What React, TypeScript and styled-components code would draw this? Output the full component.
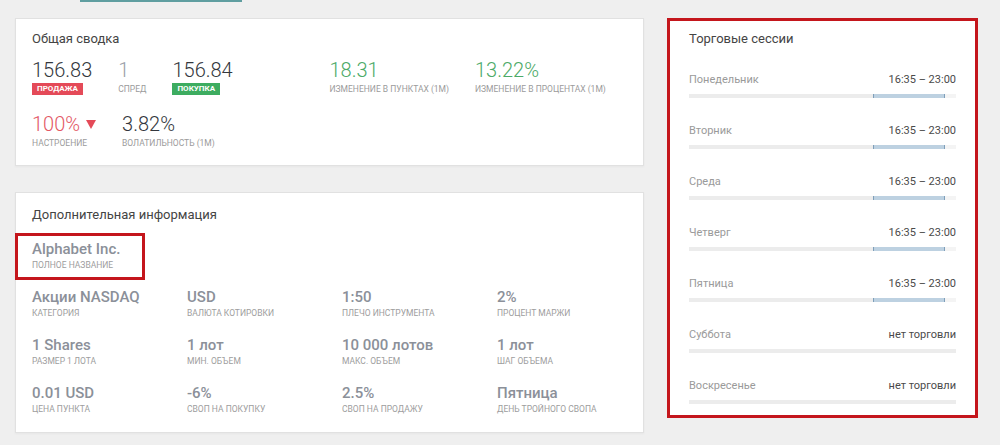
import styled, { createGlobalStyle } from "styled-components";

const GlobalStyle = createGlobalStyle`
  html, body {
    margin: 0;
    padding: 0;
    background: #efefef;
    font-family: Roboto, "Noto Sans", "Liberation Sans", sans-serif;
  }
  * {
    box-sizing: border-box;
  }
`;

const Page = styled.div`
  width: 1000px;
  height: 445px;
  overflow: hidden;
  padding: 0 22px 0 15px;
`;

const TabStrip = styled.div`
  height: 18px;
  display: flex;
  align-items: flex-start;
`;

const TabIndicator = styled.div`
  margin-left: 65px;
  width: 162px;
  height: 2px;
  background: #5f9ea0;
`;

const Columns = styled.div`
  display: grid;
  grid-template-columns: 629px 311px;
  column-gap: 23px;
  align-items: start;
`;

const LeftColumn = styled.div`
  display: flex;
  flex-direction: column;
  gap: 26px;
`;

const Card = styled.section`
  background: #fff;
  border: 1px solid #e1e1e1;
  box-shadow: 0 1px 2px rgba(0, 0, 0, 0.04);
  padding: 12px 16px 0;
`;

const SummaryCard = styled(Card)`
  height: 148px;
`;

const InfoCard = styled(Card)`
  height: 241px;
  padding-top: 14px;
`;

const CardTitle = styled.h3`
  margin: 0;
  font-size: 13px;
  line-height: 16px;
  font-weight: 400;
  color: #444;
`;

const Halves = styled.div`
  display: grid;
  grid-template-columns: 1fr 1fr;
  margin-top: 12px;
`;

const StatRow = styled.div<{ $top?: number }>`
  display: flex;
  gap: 26px;
  margin-top: ${({ $top }) => $top ?? 0}px;
`;

const Stat = styled.div`
  display: flex;
  flex-direction: column;
  align-items: flex-start;
`;

const BigValue = styled.div<{ $tone?: "dark" | "muted" | "green" | "red" }>`
  font-size: 20px;
  line-height: 22px;
  font-weight: 300;
  display: flex;
  align-items: center;
  gap: 6px;
  color: ${({ $tone }) =>
    $tone === "green"
      ? "#4caa67"
      : $tone === "red"
      ? "#e35865"
      : $tone === "muted"
      ? "#9aa0a8"
      : "#33373d"};
`;

const Badge = styled.span<{ $kind: "sell" | "buy" }>`
  margin-top: 2px;
  height: 12px;
  line-height: 12px;
  padding: 0 5px;
  font-size: 8px;
  font-weight: 700;
  text-transform: uppercase;
  color: #fff;
  background: ${({ $kind }) => ($kind === "sell" ? "#e44a58" : "#3dac60")};
`;

const StatLabel = styled.span`
  margin-top: 2px;
  height: 12px;
  line-height: 12px;
  font-size: 8.5px;
  text-transform: uppercase;
  color: #9b9b9b;
  white-space: nowrap;
`;

const Highlight = styled.div`
  margin: 10px 0 8px -17px;
  width: 130px;
  border: 3px solid #c4161c;
  padding: 4px 0 6px 14px;
`;

const InfoGrid = styled.div`
  display: grid;
  grid-template-columns: repeat(4, 155px);
  row-gap: 17px;
`;

const InfoItem = styled.div`
  display: flex;
  flex-direction: column;
`;

const InfoValue = styled.span`
  font-size: 15px;
  line-height: 18px;
  font-weight: 500;
  color: #8b9099;
  white-space: nowrap;
`;

const InfoLabel = styled.span`
  margin-top: 1px;
  font-size: 8.5px;
  line-height: 12px;
  text-transform: uppercase;
  color: #9d9d9d;
  white-space: nowrap;
`;

const SessionsCard = styled.section`
  background: #fff;
  border: 3px solid #c4161c;
  height: 400px;
  padding: 10px 19px 0;
`;

const SessionList = styled.div`
  display: flex;
  flex-direction: column;
  gap: 26px;
  margin-top: 26px;
`;

const SessionRow = styled.div`
  display: flex;
  flex-direction: column;
`;

const SessionHead = styled.div`
  display: flex;
  justify-content: space-between;
  font-size: 11px;
  line-height: 14px;
`;

const DayName = styled.span`
  color: #9a9a9a;
`;

const Hours = styled.span`
  color: #4a4a4a;
  font-size: 11px;
`;

const Track = styled.div`
  position: relative;
  margin-top: 7px;
  height: 4px;
  background: #ececec;
`;

const Segment = styled.div`
  position: absolute;
  top: 0;
  bottom: 0;
  background: #bdd1e1;
  border-left: 1px solid #7f9fba;
  border-right: 1px solid #7f9fba;
`;

const Tail = styled.div`
  position: absolute;
  top: 0;
  bottom: 0;
  right: 0;
  background: #f4f4f4;
`;

const DownTriangle = () => (
  <svg width="10" height="9" viewBox="0 0 10 9">
    <polygon points="0,0 10,0 5,9" fill="#e44a58" />
  </svg>
);

const info = [
  ["Акции NASDAQ", "Категория"],
  ["USD", "Валюта котировки"],
  ["1:50", "Плечо инструмента"],
  ["2%", "Процент маржи"],
  ["1 Shares", "Размер 1 лота"],
  ["1 лот", "Мин. объем"],
  ["10 000 лотов", "Макс. объем"],
  ["1 лот", "Шаг объема"],
  ["0.01 USD", "Цена пункта"],
  ["-6%", "Своп на покупку"],
  ["2.5%", "Своп на продажу"],
  ["Пятница", "День тройного свопа"],
];

const open = { from: 16 + 35 / 60, to: 23 };
const sessions: { day: string; trading: boolean }[] = [
  { day: "Понедельник", trading: true },
  { day: "Вторник", trading: true },
  { day: "Среда", trading: true },
  { day: "Четверг", trading: true },
  { day: "Пятница", trading: true },
  { day: "Суббота", trading: false },
  { day: "Воскресенье", trading: false },
];

const pct = (h: number) => `${(h / 24) * 100}%`;

export default function App() {
  return (
    <>
      <GlobalStyle />
      <Page>
        <TabStrip>
          <TabIndicator />
        </TabStrip>
        <Columns>
          <LeftColumn>
            <SummaryCard>
              <CardTitle>Общая сводка</CardTitle>
              <Halves>
                <StatRow>
                  <Stat>
                    <BigValue>156.83</BigValue>
                    <Badge $kind="sell">Продажа</Badge>
                  </Stat>
                  <Stat>
                    <BigValue $tone="muted">1</BigValue>
                    <StatLabel>Спред</StatLabel>
                  </Stat>
                  <Stat>
                    <BigValue>156.84</BigValue>
                    <Badge $kind="buy">Покупка</Badge>
                  </Stat>
                </StatRow>
                <StatRow>
                  <Stat>
                    <BigValue $tone="green">18.31</BigValue>
                    <StatLabel>Изменение в пунктах (1М)</StatLabel>
                  </Stat>
                  <Stat>
                    <BigValue $tone="green">13.22%</BigValue>
                    <StatLabel>Изменение в процентах (1М)</StatLabel>
                  </Stat>
                </StatRow>
              </Halves>
              <StatRow $top={18}>
                <Stat>
                  <BigValue $tone="red">
                    100%
                    <DownTriangle />
                  </BigValue>
                  <StatLabel>Настроение</StatLabel>
                </Stat>
                <Stat>
                  <BigValue>3.82%</BigValue>
                  <StatLabel>Волатильность (1М)</StatLabel>
                </Stat>
              </StatRow>
            </SummaryCard>

            <InfoCard>
              <CardTitle>Дополнительная информация</CardTitle>
              <Highlight>
                <InfoItem>
                  <InfoValue>Alphabet Inc.</InfoValue>
                  <InfoLabel>Полное название</InfoLabel>
                </InfoItem>
              </Highlight>
              <InfoGrid>
                {info.map(([value, label], i) => (
                  <InfoItem key={i}>
                    <InfoValue>{value}</InfoValue>
                    <InfoLabel>{label}</InfoLabel>
                  </InfoItem>
                ))}
              </InfoGrid>
            </InfoCard>
          </LeftColumn>

          <SessionsCard>
            <CardTitle>Торговые сессии</CardTitle>
            <SessionList>
              {sessions.map((s) => (
                <SessionRow key={s.day}>
                  <SessionHead>
                    <DayName>{s.day}</DayName>
                    <Hours>{s.trading ? "16:35 – 23:00" : "нет торговли"}</Hours>
                  </SessionHead>
                  <Track>
                    {s.trading && (
                      <>
                        <Segment
                          style={{
                            left: pct(open.from),
                            width: pct(open.to - open.from),
                          }}
                        />
                        <Tail style={{ width: pct(24 - open.to - 0.05) }} />
                      </>
                    )}
                  </Track>
                </SessionRow>
              ))}
            </SessionList>
          </SessionsCard>
        </Columns>
      </Page>
    </>
  );
}
